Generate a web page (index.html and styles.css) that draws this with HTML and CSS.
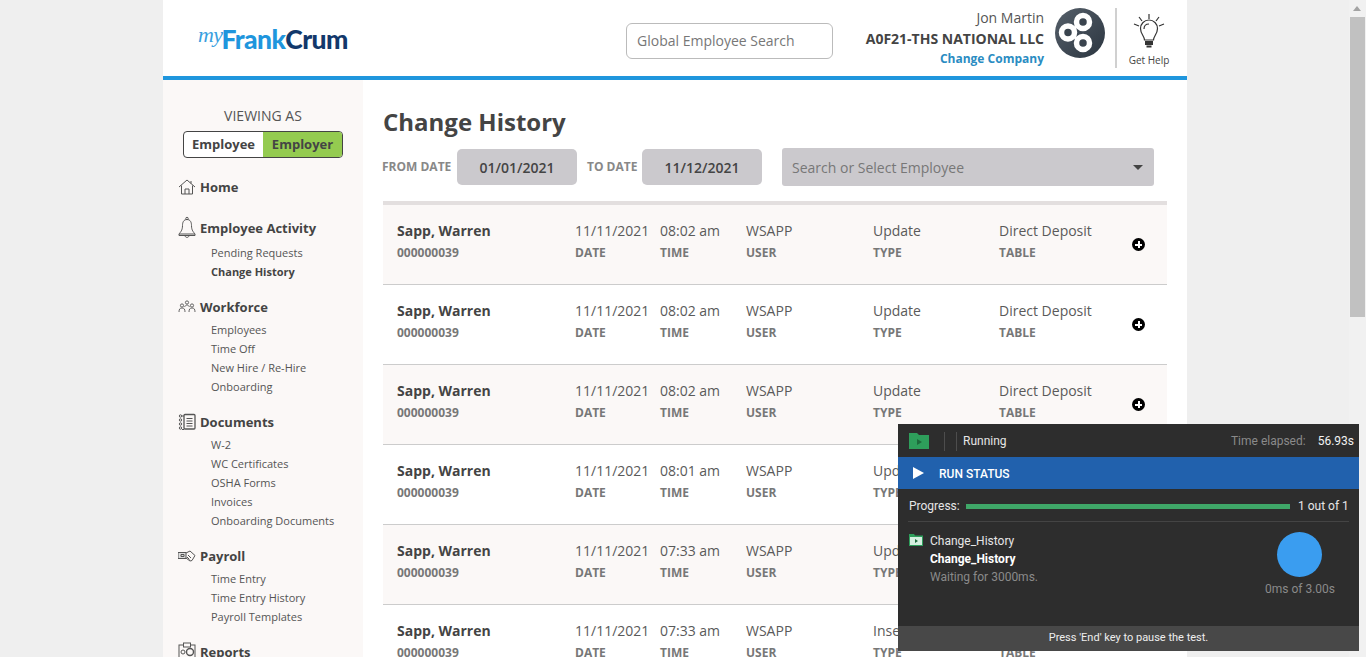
FILE: index.html
```html
<!DOCTYPE html>
<html lang="en">

<head>
    <meta charset="UTF-8">
    <title>Change History</title>
    <link rel="stylesheet" href="styles.css">
</head>

<body>
    <div class="page">
        <!-- Header -->
        <header class="top">
            <div class="logo"><span class="logo-my">my</span><span class="logo-frank">Frank</span><span class="logo-crum">Crum</span></div>
            <div class="global-search">Global Employee Search</div>
            <div class="account">
                <div class="account-name">Jon Martin</div>
                <div class="account-company">A0F21-THS NATIONAL LLC</div>
                <div class="account-change">Change Company</div>
            </div>
            <svg class="company-mark" viewBox="0 0 50 50" width="50" height="50">
                <defs>
                    <linearGradient id="markfill" x1="0" y1="0" x2="1" y2="1">
                        <stop offset="0" stop-color="#56606a" />
                        <stop offset="1" stop-color="#2b3540" />
                    </linearGradient>
                </defs>
                <circle cx="25" cy="25" r="25" fill="url(#markfill)" />
                <path d="M13 24.500L28 14M13 24.500L28 35" stroke="#fff" stroke-width="2.500" fill="none" />
                <circle cx="13" cy="24.500" r="6.500" fill="#3a444e" stroke="#fff" stroke-width="5.500" />
                <circle cx="28" cy="14" r="6.500" fill="#3a444e" stroke="#fff" stroke-width="5.500" />
                <circle cx="28" cy="35" r="6.500" fill="#3a444e" stroke="#fff" stroke-width="5.500" />
            </svg>
            <div class="help">
                <svg viewBox="0 0 32 36" width="32" height="36" fill="none" stroke="#333" stroke-width="1.2">
                    <path d="M16 1v5M6 4l3 4M26 4l-3 4M1 11l5 2M31 11l-5 2" />
                    <path d="M11.500 27c0-4-4-6-4-11.500a8.500 8.500 0 0 1 17 0c0 5.500-4 7.500-4 11.500z" />
                    <path d="M11 16c0-3 2-5 5-5" />
                    <path d="M12 29h8M12 31h8M13.500 33.500h5" stroke-width="1.800" />
                </svg>
                <span>Get Help</span>
            </div>
        </header>

        <div class="main">
            <!-- Sidebar -->
            <nav class="side">
                <div class="viewing">VIEWING AS</div>
                <div class="toggle">
                    <span>Employee</span>
                    <span class="toggle-on">Employer</span>
                </div>

                <div class="group group-home">
                    <h4>
                        <svg viewBox="0 0 18 18" width="18" height="18" fill="none" stroke="#555" stroke-width="1">
                            <path d="M1 9l8-7 8 7M3.500 7.500V16h11V7.500M7 16v-5h4v5M13 3v2.500" />
                        </svg>
                        Home
                    </h4>
                </div>

                <div class="group group-first">
                    <h4>
                        <svg viewBox="0 0 18 24" width="18" height="24" fill="none" stroke="#555" stroke-width="1">
                            <path d="M9 3.500c-3.500 0-4.500 3-4.500 6 0 5-2 6.500-3.500 8.500h16c-1.500-2-3.500-3.500-3.500-8.500 0-3-1-6-4.500-6z" />
                            <circle cx="9" cy="2.500" r="1.200" />
                            <path d="M1 18v1.500h16V18M7 19.500c0 2.500 4 2.500 4 0" />
                        </svg>
                        Employee Activity
                    </h4>
                    <a href="#">Pending Requests</a>
                    <a href="#" class="current">Change History</a>
                </div>

                <div class="group">
                    <h4>
                        <svg viewBox="0 0 18 14" width="18" height="14" fill="none" stroke="#555" stroke-width="0.9">
                            <circle cx="4" cy="5.500" r="1.600" />
                            <circle cx="9" cy="2.500" r="1.600" />
                            <circle cx="14" cy="5.500" r="1.600" />
                            <path d="M1 12c0-3 1-4 3-4s3 1 3 4M6.500 7c.5-1 1.500-2 2.500-2s2 1 2.500 2M11 12c0-3 1-4 3-4s3 1 3 4" />
                        </svg>
                        Workforce
                    </h4>
                    <a href="#">Employees</a>
                    <a href="#">Time Off</a>
                    <a href="#">New Hire / Re-Hire</a>
                    <a href="#">Onboarding</a>
                </div>

                <div class="group">
                    <h4>
                        <svg viewBox="0 0 18 18" width="18" height="18" fill="none" stroke="#555" stroke-width="1">
                            <rect x="6" y="1.500" width="11" height="14.500" rx="1" stroke-width="1.300" />
                            <path d="M8.500 5.500h6M8.500 8h6M8.500 10.500h6M8.500 13h6M4 3h2M4 16.500h2" />
                            <circle cx="2.500" cy="3" r="1.200" />
                            <circle cx="2.500" cy="7" r="1.200" />
                            <circle cx="2.500" cy="11" r="1.200" />
                            <circle cx="2.500" cy="15" r="1.200" />
                        </svg>
                        Documents
                    </h4>
                    <a href="#">W-2</a>
                    <a href="#">WC Certificates</a>
                    <a href="#">OSHA Forms</a>
                    <a href="#">Invoices</a>
                    <a href="#">Onboarding Documents</a>
                </div>

                <div class="group">
                    <h4>
                        <svg viewBox="0 0 18 12" width="18" height="12" fill="none" stroke="#555" stroke-width="1">
                            <path d="M0 2.500h8v6H0z" fill="#ddd" />
                            <path d="M3 4.500h3v2H3zM8 3l4-2 5 4.500-3 5-2 .5-4-3" />
                            <path d="M10 5l3 3M9 7l2.500 2.500" />
                        </svg>
                        Payroll
                    </h4>
                    <a href="#">Time Entry</a>
                    <a href="#">Time Entry History</a>
                    <a href="#">Payroll Templates</a>
                </div>

                <div class="group">
                    <h4>
                        <svg viewBox="0 0 18 20" width="18" height="20" fill="none" stroke="#555" stroke-width="1">
                            <rect x="1" y="3" width="16" height="16" />
                            <rect x="5.500" y="1" width="7" height="4" fill="#fbf8f7" />
                            <circle cx="5" cy="10" r="2" />
                            <circle cx="12" cy="10" r="3.500" stroke-width="1.400" />
                        </svg>
                        Reports
                    </h4>
                </div>
            </nav>

            <!-- Change history list -->
            <section class="content">
                <h1>Change History</h1>

                <div class="filters">
                    <label class="label-from">FROM DATE</label>
                    <div class="date-box">01/01/2021</div>
                    <label class="label-to">TO DATE</label>
                    <div class="date-box">11/12/2021</div>
                    <div class="employee-select">
                        <span>Search or Select Employee</span>
                        <i class="caret"></i>
                    </div>
                </div>

                <div class="history">
                    <div class="row">
                        <div class="cell cell-name"><b>Sapp, Warren</b><small>000000039</small></div>
                        <div class="cell">11/11/2021<small>DATE</small></div>
                        <div class="cell">08:02 am<small>TIME</small></div>
                        <div class="cell">WSAPP<small>USER</small></div>
                        <div class="cell">Update<small>TYPE</small></div>
                        <div class="cell">Direct Deposit<small>TABLE</small></div>
                        <div class="expand"></div>
                    </div>
                    <div class="row">
                        <div class="cell cell-name"><b>Sapp, Warren</b><small>000000039</small></div>
                        <div class="cell">11/11/2021<small>DATE</small></div>
                        <div class="cell">08:02 am<small>TIME</small></div>
                        <div class="cell">WSAPP<small>USER</small></div>
                        <div class="cell">Update<small>TYPE</small></div>
                        <div class="cell">Direct Deposit<small>TABLE</small></div>
                        <div class="expand"></div>
                    </div>
                    <div class="row">
                        <div class="cell cell-name"><b>Sapp, Warren</b><small>000000039</small></div>
                        <div class="cell">11/11/2021<small>DATE</small></div>
                        <div class="cell">08:02 am<small>TIME</small></div>
                        <div class="cell">WSAPP<small>USER</small></div>
                        <div class="cell">Update<small>TYPE</small></div>
                        <div class="cell">Direct Deposit<small>TABLE</small></div>
                        <div class="expand"></div>
                    </div>
                    <div class="row">
                        <div class="cell cell-name"><b>Sapp, Warren</b><small>000000039</small></div>
                        <div class="cell">11/11/2021<small>DATE</small></div>
                        <div class="cell">08:01 am<small>TIME</small></div>
                        <div class="cell">WSAPP<small>USER</small></div>
                        <div class="cell">Update<small>TYPE</small></div>
                        <div class="cell">Direct Deposit<small>TABLE</small></div>
                        <div class="expand"></div>
                    </div>
                    <div class="row">
                        <div class="cell cell-name"><b>Sapp, Warren</b><small>000000039</small></div>
                        <div class="cell">11/11/2021<small>DATE</small></div>
                        <div class="cell">07:33 am<small>TIME</small></div>
                        <div class="cell">WSAPP<small>USER</small></div>
                        <div class="cell">Update<small>TYPE</small></div>
                        <div class="cell">Direct Deposit<small>TABLE</small></div>
                        <div class="expand"></div>
                    </div>
                    <div class="row">
                        <div class="cell cell-name"><b>Sapp, Warren</b><small>000000039</small></div>
                        <div class="cell">11/11/2021<small>DATE</small></div>
                        <div class="cell">07:33 am<small>TIME</small></div>
                        <div class="cell">WSAPP<small>USER</small></div>
                        <div class="cell">Insert<small>TYPE</small></div>
                        <div class="cell">Direct Deposit<small>TABLE</small></div>
                        <div class="expand"></div>
                    </div>
                </div>
            </section>
        </div>
    </div>

    <!-- Browser scrollbar -->
    <div class="scrollbar">
        <i class="scroll-arrow"></i>
        <div class="scroll-thumb"></div>
    </div>

    <!-- Test runner overlay -->
    <aside class="runner">
        <div class="runner-head">
            <svg viewBox="0 0 20 16" width="20" height="16">
                <path d="M0 0h8l2 2h10v14H0z" fill="#2e9e5b" />
                <path d="M8 6l5 3-5 3z" fill="#1d6a3c" />
            </svg>
            <i class="runner-sep"></i>
            <i class="runner-sep"></i>
            <span class="runner-state">Running</span>
            <span class="runner-time">Time elapsed:</span>
            <span class="runner-secs">56.93s</span>
        </div>
        <div class="runner-bar">
            <i class="play"></i>
            <span>RUN STATUS</span>
        </div>
        <div class="runner-progress">
            <span class="progress-label">Progress:</span>
            <div class="progress-line"></div>
            <span class="progress-count">1 out of 1</span>
        </div>
        <div class="runner-body">
            <svg class="test-icon" viewBox="0 0 14 12" width="14" height="12">
                <path d="M0 0h5l1 1.500h8V12H0z" fill="#2e9e5b" />
                <path d="M1 3h12v8H1z" fill="#d5efe0" />
                <path d="M6 5l3 2-3 2z" fill="#1d6a3c" />
            </svg>
            <div class="test-text">
                <div>Change_History</div>
                <div class="test-step">Change_History</div>
                <div class="test-wait">Waiting for 3000ms.</div>
            </div>
            <div class="timer">
                <div class="timer-dot"></div>
                <span>0ms of 3.00s</span>
            </div>
        </div>
        <div class="runner-foot">Press 'End' key to pause the test.</div>
    </aside>
</body>

</html>
```

FILE: styles.css
```css
/* Set the style of the entire page */
html,
body {
    height: 100%;
    overflow: hidden;
}

body {
    margin: 0;
    background-color: #efefef;
    font-family: 'Open Sans', 'Noto Sans', sans-serif;
    color: #4a4a4a;
}

.page {
    width: 1024px;
    height: 657px;
    margin-left: 163px;
    background-color: #ffffff;
    overflow: hidden;
}

/* Header */
.top {
    display: flex;
    align-items: center;
    height: 76px;
    border-bottom: 4px solid #1f96dd;
    box-sizing: content-box;
}

.logo {
    width: 463px;
    padding: 2px 0 0 35px;
    box-sizing: border-box;
    display: flex;
    align-items: baseline;
    font-family: 'Lato', sans-serif;
    font-weight: 900;
    font-size: 26.5px;
    letter-spacing: -0.6px;
}

.logo-my {
    font-family: 'Liberation Serif', serif;
    font-style: italic;
    font-weight: 400;
    font-size: 22px;
    color: #3a9fe0;
    margin-right: -1px;
    position: relative;
    top: -7px;
}

.logo-frank {
    color: #1f96dd;
}

.logo-crum {
    color: #12386b;
}

.global-search {
    width: 207px;
    height: 36px;
    box-sizing: border-box;
    border: 1px solid #bbbbbb;
    border-radius: 6px;
    padding-left: 10px;
    font-size: 14px;
    line-height: 34px;
    color: #777777;
    margin-top: 5px;
}

.account {
    width: 211px;
    text-align: right;
    line-height: 20px;
}

.account-name {
    font-size: 14px;
    color: #555555;
}

.account-company {
    font-size: 14px;
    font-weight: 700;
    color: #444444;
    line-height: 21px;
}

.account-change {
    font-size: 12px;
    font-weight: 700;
    color: #2a8cc2;
}

.company-mark {
    margin-left: 11px;
    margin-top: -10px;
}

.help {
    margin-left: 10px;
    height: 60px;
    width: 66px;
    box-sizing: border-box;
    padding: 5px 0 1px;
    border-left: 2px solid #d0d0d0;
    display: flex;
    flex-direction: column;
    align-items: center;
    justify-content: space-between;
    font-size: 10px;
    color: #444444;
}

/* Sidebar and content */
.main {
    display: flex;
}

.side {
    width: 200px;
    height: 577px;
    flex-shrink: 0;
    box-sizing: border-box;
    padding: 26px 0 0 15px;
    background-color: #fbf8f7;
}

.viewing {
    width: 170px;
    text-align: center;
    font-size: 14px;
    line-height: 19px;
    color: #555555;
}

.toggle {
    display: flex;
    width: 160px;
    height: 27px;
    margin: 6px 0 0 5px;
    box-sizing: border-box;
    border: 1px solid #444444;
    border-radius: 4px;
    overflow: hidden;
    background-color: #ffffff;
    font-size: 13px;
    font-weight: 700;
    line-height: 25px;
    color: #444444;
}

.toggle span {
    width: 50%;
    text-align: center;
}

.toggle-on {
    background-color: #94cb50;
}

.group {
    margin-bottom: 16px;
}

.group-home {
    margin-top: 19px;
    margin-bottom: 21px;
}

.group h4 {
    position: relative;
    margin: 0 0 3px;
    padding-left: 22px;
    font-size: 13px;
    line-height: 20px;
    color: #444444;
}

.group-first h4 {
    margin-bottom: 5px;
}

.group h4 svg {
    position: absolute;
    left: 0;
    top: 50%;
    transform: translateY(-50%);
}

.group a {
    display: block;
    padding-left: 33px;
    font-size: 11px;
    line-height: 19px;
    color: #555555;
    text-decoration: none;
}

.group a.current {
    font-weight: 700;
    color: #444444;
}

.content {
    flex: 1;
    padding: 0 20px;
}

h1 {
    margin: 24px 0 0;
    font-size: 24px;
    line-height: 35px;
    color: #444444;
}

/* Filters */
.filters {
    display: flex;
    align-items: center;
    height: 38px;
    margin: 9px 0 0 -1px;
}

.filters label {
    font-size: 12px;
    font-weight: 700;
    color: #888888;
    margin-top: -2px;
    white-space: nowrap;
}

.label-from {
    width: 75px;
}

.label-to {
    width: 55px;
}

.date-box {
    width: 120px;
    height: 36px;
    margin-right: 10px;
    border-radius: 5px;
    background-color: #cbc9cd;
    text-align: center;
    font-size: 14px;
    font-weight: 600;
    line-height: 38px;
    color: #444444;
}

.label-to + .date-box {
    margin-right: 20px;
}

.employee-select {
    display: flex;
    align-items: center;
    justify-content: space-between;
    width: 372px;
    height: 38px;
    box-sizing: border-box;
    padding: 0 10px;
    border-radius: 3px;
    background-color: #cbc9cd;
    font-size: 14px;
    color: #777777;
}

.caret {
    width: 0;
    height: 0;
    margin-right: 1px;
    border-left: 5px solid transparent;
    border-right: 5px solid transparent;
    border-top: 5px solid #444444;
}

/* History rows */
.history {
    margin-top: 15px;
    border-top: 4px solid #e3dfdf;
}

.row {
    display: grid;
    grid-template-columns: 178px 85px 86px 127px 126px 133px 1fr;
    align-items: center;
    height: 80px;
    box-sizing: border-box;
    padding-left: 14px;
    border-bottom: 1px solid #cccccc;
}

.row:nth-child(odd) {
    background-color: #fbf8f7;
}

.cell {
    font-size: 14px;
    line-height: 21px;
    color: #5a5a5a;
    margin: -1px 0 4px;
}

.cell small {
    display: block;
    margin-top: 1px;
    font-size: 12px;
    font-weight: 700;
    line-height: 22px;
    color: #777777;
}

.cell-name b {
    color: #444444;
}

.expand {
    position: relative;
    width: 13px;
    height: 13px;
    border-radius: 50%;
    background-color: #000000;
}

.expand::before,
.expand::after {
    content: "";
    position: absolute;
    background-color: #ffffff;
}

.expand::before {
    left: 3px;
    top: 5.5px;
    width: 7px;
    height: 2px;
}

.expand::after {
    left: 5.5px;
    top: 3px;
    width: 2px;
    height: 7px;
}

/* Browser scrollbar */
.scrollbar {
    position: fixed;
    top: 0;
    right: 0;
    bottom: 0;
    width: 17px;
    background-color: #f1f1f1;
}

.scroll-arrow {
    position: absolute;
    top: 6px;
    left: 4px;
    border-left: 4px solid transparent;
    border-right: 4px solid transparent;
    border-bottom: 5px solid #a3a3a3;
}

.scroll-thumb {
    position: absolute;
    top: 17px;
    left: 1px;
    width: 15px;
    height: 300px;
    background-color: #c1c1c1;
}

/* Test runner overlay */
.runner {
    position: fixed;
    left: 898px;
    top: 424px;
    width: 461px;
    height: 227px;
    display: flex;
    flex-direction: column;
    background-color: #2d2d2d;
    font-family: 'Roboto', sans-serif;
    font-size: 12px;
    color: #e6e6e6;
}

.runner-head {
    display: flex;
    align-items: center;
    height: 33px;
    padding: 1px 5px 0 11px;
    box-sizing: border-box;
    flex-shrink: 0;
}

.runner-head svg {
    margin-top: -1px;
}

.runner-sep {
    width: 1px;
    height: 19px;
    margin-left: 15px;
    background-color: #4d4d4d;
}

.runner-sep + .runner-sep {
    margin-left: 11px;
}

.runner-state {
    margin-left: 6px;
}

.runner-time {
    margin-left: auto;
    color: #8a8a8a;
}

.runner-secs {
    margin-left: 12px;
    color: #f2f2f2;
}

.runner-bar {
    display: flex;
    align-items: center;
    height: 32px;
    padding: 1px 0 0 15px;
    box-sizing: border-box;
    flex-shrink: 0;
    background-color: #2161ad;
    font-weight: 500;
    color: #ffffff;
}

.play {
    width: 0;
    height: 0;
    margin: -1px 15px 0 0;
    border-left: 11px solid #ffffff;
    border-top: 6px solid transparent;
    border-bottom: 6px solid transparent;
}

.runner-progress {
    display: flex;
    align-items: center;
    height: 33px;
    padding-top: 2px;
    box-sizing: border-box;
    margin: 0 10px;
    border-bottom: 1px solid #444444;
    flex-shrink: 0;
}

.progress-label {
    width: 57px;
    margin-left: 1px;
}

.progress-line {
    width: 324px;
    height: 5px;
    background-color: #3fa768;
}

.progress-count {
    margin-left: 8px;
}

.runner-body {
    flex: 1;
    display: flex;
    padding: 10px 24px 0 11px;
}

.test-icon {
    margin-top: 2px;
}

.test-text {
    flex: 1;
    margin-left: 7px;
    line-height: 18px;
}

.test-step {
    font-weight: 700;
    color: #ffffff;
}

.test-wait {
    color: #8a8a8a;
}

.timer {
    display: flex;
    flex-direction: column;
    align-items: center;
    color: #8a8a8a;
}

.timer-dot {
    width: 45px;
    height: 45px;
    margin-bottom: 5px;
    border-radius: 50%;
    background-color: #3a9df0;
}

.runner-foot {
    height: 25px;
    flex-shrink: 0;
    background-color: #484848;
    text-align: center;
    line-height: 24px;
    font-size: 11px;
    color: #eeeeee;
}
```
